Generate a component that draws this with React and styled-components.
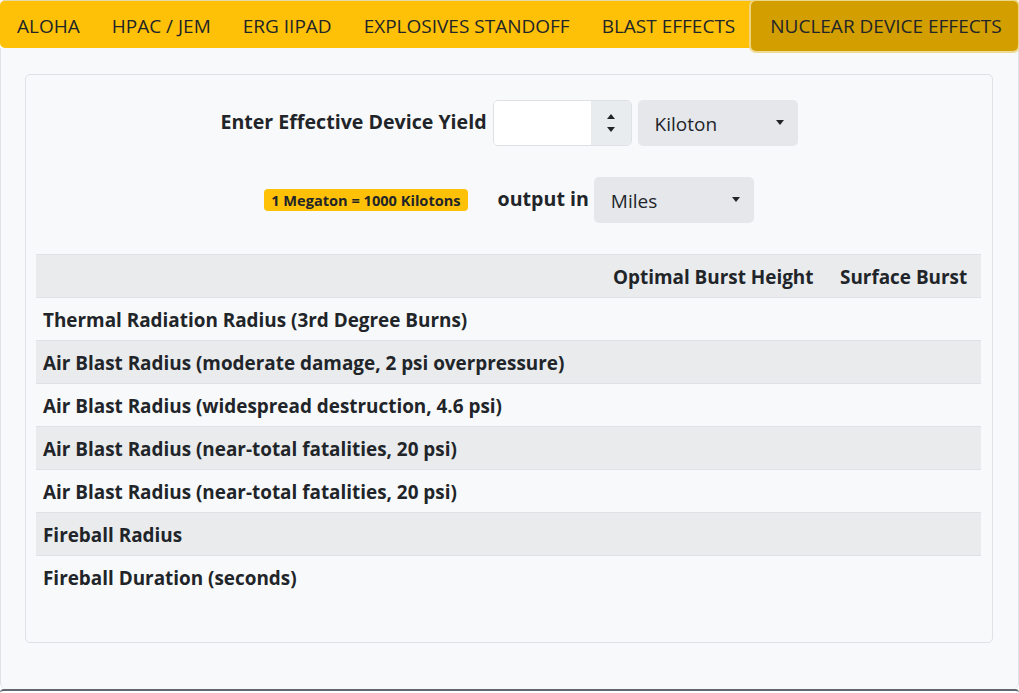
import React from 'react'
import styled, { createGlobalStyle, css } from 'styled-components'

const Global = createGlobalStyle`
    html, body {
        margin: 0;
        padding: 0;
        background: #ffffff;
    }
    body {
        font-family: "Open Sans", "Noto Sans", "Liberation Sans", sans-serif;
        color: #212529;
    }
`

const tabs = ['ALOHA', 'HPAC / JEM', 'ERG IIPAD', 'EXPLOSIVES STANDOFF', 'BLAST EFFECTS', 'NUCLEAR DEVICE EFFECTS']

const rows = [
    'Thermal Radiation Radius (3rd Degree Burns)',
    'Air Blast Radius (moderate damage, 2 psi overpressure)',
    'Air Blast Radius (widespread destruction, 4.6 psi)',
    'Air Blast Radius (near-total fatalities, 20 psi)',
    'Air Blast Radius (near-total fatalities, 20 psi)',
    'Fireball Radius',
    'Fireball Duration (seconds)'
]

const ArrowDown = () => (
    <svg width="8" height="6" viewBox="0 0 8 6">
        <path d="M0 0 L8 0 L4 5 Z" fill="#212529" />
    </svg>
)

const Spinner = () => (
    <svg width="8" height="22" viewBox="0 0 8 22">
        <path d="M0 7 L8 7 L4 2 Z" fill="#212529" />
        <path d="M0 15 L8 15 L4 20 Z" fill="#212529" />
    </svg>
)

export default function App() {
    return (
        <>
            <Global />
            <Page>
                <NavBar>
                    {tabs.map(t => (
                        <NavItem key={t} active={t === 'NUCLEAR DEVICE EFFECTS'}>{t}</NavItem>
                    ))}
                </NavBar>
                <Main>
                    <Card>
                        <FormRow>
                            <Label>Enter Effective Device Yield</Label>
                            <NumberBox>
                                <NumberField />
                                <SpinBox><Spinner /></SpinBox>
                            </NumberBox>
                            <Select>
                                <span>Kiloton</span>
                                <ArrowDown />
                            </Select>
                        </FormRow>
                        <FormRow>
                            <Badge>1 Megaton = 1000 Kilotons</Badge>
                            <Label wide>output in</Label>
                            <Select>
                                <span>Miles</span>
                                <ArrowDown />
                            </Select>
                        </FormRow>
                        <Table>
                            <colgroup>
                                <col />
                                <col style={{ width: 227 }} />
                                <col style={{ width: 148 }} />
                            </colgroup>
                            <thead>
                                <tr>
                                    <Th></Th>
                                    <Th>Optimal Burst Height</Th>
                                    <Th>Surface Burst</Th>
                                </tr>
                            </thead>
                            <tbody>
                                {rows.map((r, i) => (
                                    <Tr key={i} striped={i % 2 === 1}>
                                        <Td>{r}</Td>
                                        <Td></Td>
                                        <Td></Td>
                                    </Tr>
                                ))}
                            </tbody>
                        </Table>
                    </Card>
                </Main>
                <FooterEdge />
            </Page>
        </>
    )
}

const Page = styled.div`
    width: 1019px;
    height: 693px;
    display: flex;
    flex-direction: column;
    overflow: hidden;
`
const NavBar = styled.nav`
    flex: 0 0 48px;
    background: #ffc107;
    border-radius: 5px;
    border-top: 1px solid #e8d9a8;
    display: flex;
    align-items: stretch;
    padding-left: 1px;
    box-sizing: border-box;
    position: relative;
    z-index: 1;
`
const NavItem = styled.div`
    display: flex;
    align-items: center;
    padding: 2px 16px 0;
    font-size: 19px;
    color: #212529;
    white-space: nowrap;
    ${({ active }) => active && css`
        background: #d39e00;
        border-radius: 5px;
        padding: 0 16px 0 19px;
        margin-bottom: -3px;
        box-shadow: 0 0 0 2px rgba(236, 214, 140, 0.9);
    `}
`
const Main = styled.main`
    flex: 0 0 641px;
    background: #f8f9fa;
    border-left: 1px solid #dee2e6;
    border-right: 1px solid #dee2e6;
    border-radius: 0 0 6px 6px;
    padding: 26px 25px 0 24px;
    box-sizing: border-box;
`
const Card = styled.section`
    height: 569px;
    border: 1px solid #dee2e6;
    border-radius: 5px;
    background: #f8f9fa;
    box-sizing: border-box;
    padding: 25px 10px 0 10px;
`
const FormRow = styled.div`
    display: flex;
    align-items: center;
    justify-content: center;
    gap: 6px;
    height: 46px;
    margin-bottom: 31px;
`
const Label = styled.label`
    font-weight: 700;
    font-size: 19.6px;
    color: #212529;
    margin-top: -3px;
    ${({ wide }) => wide && css`
        margin-left: 24px;
        margin-right: -1px;
    `}
`
const NumberBox = styled.div`
    display: flex;
    width: 139px;
    height: 46px;
    border-radius: 5px;
    overflow: hidden;
    border: 1px solid #dee2e6;
    box-sizing: border-box;
`
const NumberField = styled.div`
    flex: 1;
    background: #ffffff;
`
const SpinBox = styled.div`
    width: 40px;
    background: #e9ecef;
    display: flex;
    align-items: center;
    justify-content: center;
`
const Select = styled.div`
    width: 160px;
    height: 46px;
    border-radius: 5px;
    background: #e5e7eb;
    display: flex;
    align-items: center;
    justify-content: space-between;
    padding: 0 14px 0 17px;
    box-sizing: border-box;
    font-size: 19px;
    color: #212529;
    & > span {
        margin-top: 2px;
    }
`
const Badge = styled.span`
    background: #ffc107;
    border-radius: 4px;
    font-size: 14.6px;
    font-weight: 700;
    color: #212529;
    padding: 1px 7px;
    line-height: 20px;
    margin-top: -1px;
`
const Table = styled.table`
    width: 945px;
    border-collapse: collapse;
    table-layout: fixed;
`
const Th = styled.th`
    height: 43px;
    background: #e9ebed;
    text-align: left;
    font-weight: 700;
    font-size: 18.9px;
    padding: 2px 7px 0;
    border-top: 1px solid #dee2e6;
    box-sizing: border-box;
    white-space: nowrap;
`
const Tr = styled.tr`
    background: ${({ striped }) => (striped ? '#e9ebed' : 'transparent')};
`
const Td = styled.td`
    height: 43px;
    padding: 2px 7px 0;
    font-weight: 700;
    font-size: 18.9px;
    border-top: 1px solid #dee2e6;
    box-sizing: border-box;
    white-space: nowrap;
`
const FooterEdge = styled.div`
    flex: 0 0 4px;
    border-top: 2px solid #5f6870;
    border-radius: 4px 4px 0 0;
    background: #ffffff;
    box-sizing: border-box;
`
